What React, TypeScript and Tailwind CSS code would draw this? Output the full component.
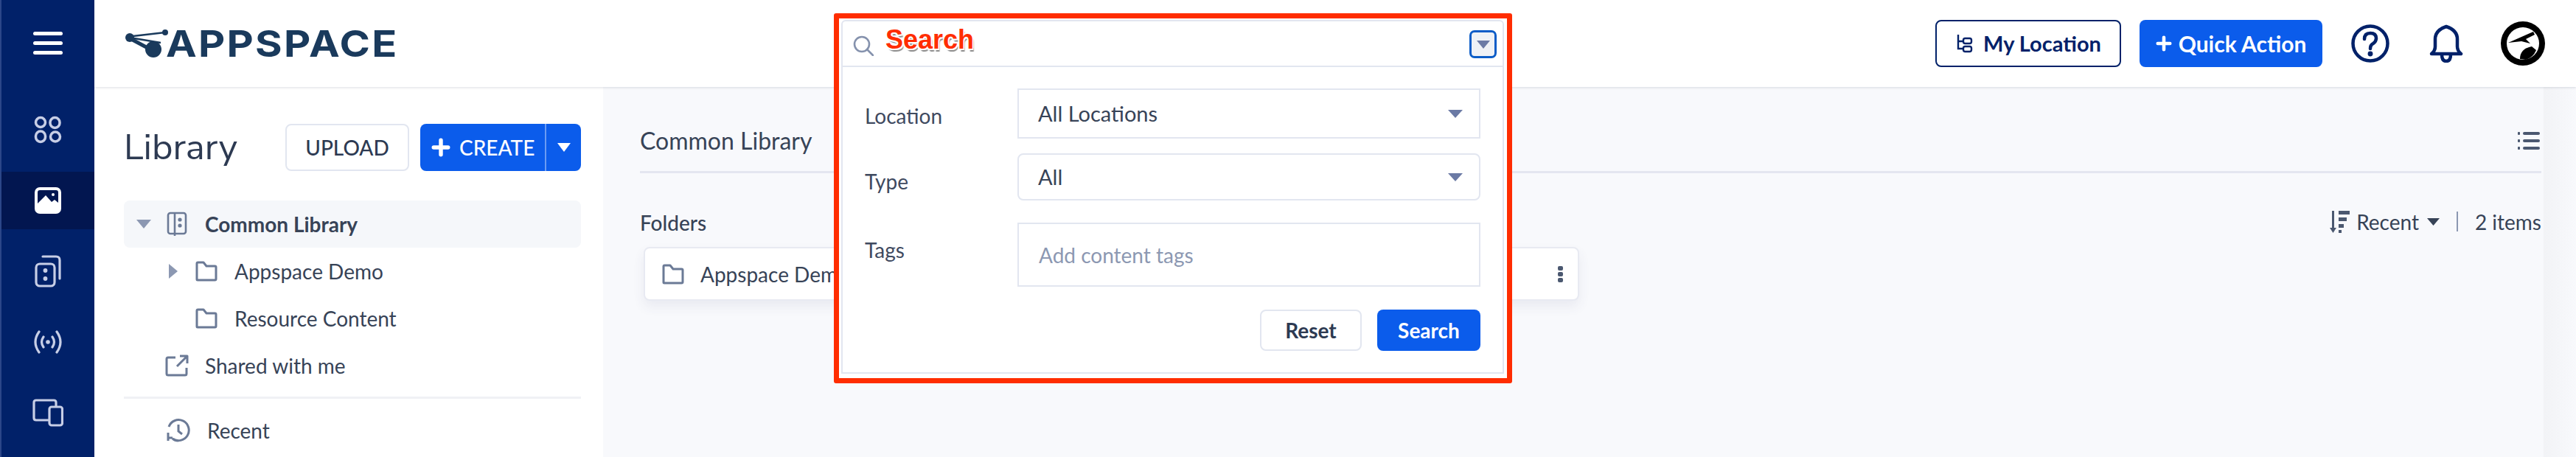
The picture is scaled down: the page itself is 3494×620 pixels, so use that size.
import React from "react";

const Caret = ({ className, right }: { className: string; right?: boolean }) => (
  <svg viewBox="0 0 20 12" className={className} preserveAspectRatio="none" fill="currentColor">
    {right ? <path d="M0 0 L20 6 L0 12 Z" /> : <path d="M0 0 H20 L10 12 Z" />}
  </svg>
);

const Folder = ({ className }: { className: string }) => (
  <svg viewBox="0 0 30 28" className={className} fill="none" stroke="currentColor" strokeWidth="3" strokeLinejoin="round">
    <path d="M2 25 V3.5 Q2 2 3.5 2 H11 L15 7 H26.5 Q28 7 28 8.5 V24.5 Q28 26 26.5 26 H3 Q2 26 2 25 Z" />
  </svg>
);

const Plus = ({ className }: { className: string }) => (
  <svg viewBox="0 0 24 24" className={className} fill="none" stroke="currentColor" strokeWidth="5" strokeLinecap="round">
    <path d="M12 3 V21 M3 12 H21" />
  </svg>
);

function Rail() {
  return (
    <div className="w-[128px] h-full shrink-0 flex flex-col bg-[#012169] border-l-2 border-[#2c4688]">
      <div className="h-[118px] flex items-center justify-center shrink-0">
        <div className="flex flex-col gap-[8px] -mt-[1px]">
          <div className="w-[40px] h-[5px] rounded-full bg-white" />
          <div className="w-[40px] h-[5px] rounded-full bg-white" />
          <div className="w-[40px] h-[5px] rounded-full bg-white" />
        </div>
      </div>
      <div className="h-[115px] flex items-start justify-center pt-[39px] shrink-0">
        <svg viewBox="0 0 38 38" className="w-[38px] h-[38px]" fill="none" stroke="#c7cee6" strokeWidth="3.5">
          <circle cx="9" cy="9" r="6.5" />
          <rect x="22" y="2.5" width="13" height="14" rx="6.5" />
          <rect x="2.5" y="21" width="13" height="14.5" rx="6.5" />
          <circle cx="29" cy="28.5" r="6.5" />
        </svg>
      </div>
      <div className="h-[78px] bg-[#021650] flex items-center justify-center shrink-0">
        <svg viewBox="0 0 36 36" className="w-[36px] h-[36px]">
          <rect width="36" height="36" rx="7" fill="#fff" />
          <path d="M4 22 L4 7 Q4 4 7 4 H29 Q32 4 32 7 V21 L27 17 L23 20 L15 11 Z" fill="#021650" />
          <circle cx="25" cy="10" r="2" fill="#fff" />
        </svg>
      </div>
      <div className="flex flex-col items-center pt-[35px]">
        <svg viewBox="0 0 36 44" className="w-[36px] h-[44px]" fill="none" stroke="#c7cee6" strokeWidth="3.2" strokeLinecap="round">
          <rect x="2" y="12" width="25" height="30" rx="5" />
          <path d="M11 2 H29 Q34 2 34 7 V32" />
          <circle cx="14.5" cy="21" r="1.3" fill="#c7cee6" />
          <circle cx="14.5" cy="32" r="1.3" fill="#c7cee6" />
        </svg>
        <svg viewBox="0 0 42 32" className="w-[42px] h-[32px] mt-[58px]" fill="none" stroke="#c7cee6" strokeWidth="3.2" strokeLinecap="round">
          <path d="M9 2 Q-1 16 9 30 M33 2 Q43 16 33 30 M15 9 Q10 16 15 23 M27 9 Q32 16 27 23" />
          <circle cx="21" cy="16" r="1.2" fill="#c7cee6" />
        </svg>
        <svg viewBox="0 0 42 38" className="w-[42px] h-[38px] mt-[61px]" fill="none" stroke="#c7cee6" strokeWidth="3.2" strokeLinejoin="round">
          <path d="M22 29 H5 Q2 29 2 26 V5 Q2 2 5 2 H29 Q32 2 32 5 V10" />
          <rect x="23" y="11" width="17.5" height="25" rx="3" />
        </svg>
      </div>
    </div>
  );
}

function Header() {
  return (
    <div className="h-[118px] shrink-0 bg-white shadow-[0_1px_3px_rgba(40,50,80,0.16)] relative z-10 flex items-center pl-[42px] pr-[42px]">
      <div className="flex items-center -mt-[1px]">
        <svg viewBox="0 0 60 40" className="w-[60px] h-[40px]" fill="#1a3a5c" stroke="#1a3a5c">
          <circle cx="6" cy="12" r="6" stroke="none" />
          <circle cx="54" cy="5" r="4" stroke="none" />
          <circle cx="38" cy="28" r="11" stroke="none" />
          <path d="M6 10.5 L54 5" strokeWidth="2.4" fill="none" />
          <path d="M6 12 L48 19" strokeWidth="2.4" fill="none" />
          <path d="M6 13 L34 28" strokeWidth="5" fill="none" />
        </svg>
        <div className="ml-[-5px] w-[316px] h-[60px] text-[50px] leading-[60px] tracking-[2px] font-bold text-[#1a3a5c] font-['Inter',sans-serif] whitespace-nowrap origin-left scale-x-[1.12]">APPSPACE</div>
      </div>
      <div className="ml-auto flex items-center">
        <div className="w-[252px] h-[64px] rounded-[8px] border-2 border-[#012169] flex items-center justify-center gap-[14px] text-[#012169] text-[29px] font-bold">
          <svg viewBox="0 0 24 26" className="w-[24px] h-[26px]" fill="none" stroke="currentColor" strokeWidth="2.4">
            <path d="M4 1 V20 H11 M4 10 H11" />
            <rect x="11" y="6" width="11" height="7" rx="2.5" />
            <rect x="11" y="17" width="11" height="7" rx="2.5" />
          </svg>
          <span>My Location</span>
        </div>
        <div className="ml-[25px] w-[248px] h-[64px] rounded-[8px] bg-[#0b5ceb] flex items-center justify-center gap-[9px] text-white text-[30px] font-bold">
          <Plus className="w-[22px] h-[22px]" />
          <span>Quick Action</span>
        </div>
        <svg viewBox="0 0 52 52" className="ml-[39px] w-[52px] h-[52px]" fill="none" stroke="#012169" strokeWidth="4.5" strokeLinecap="round">
          <circle cx="26" cy="26" r="23.5" />
          <path d="M18 20 Q18 12 26 12 Q34 12 34 19 Q34 23 30 26 Q26 28 26 33" />
          <circle cx="26" cy="40" r="1.2" fill="#012169" />
        </svg>
        <svg viewBox="0 0 46 52" className="ml-[54px] w-[46px] h-[52px]" fill="none" stroke="#012169" strokeWidth="4.5" strokeLinejoin="round" strokeLinecap="round">
          <path d="M3 40 Q8 36 8 30 V20 Q8 8 23 3 Q38 8 38 20 V30 Q38 36 43 40 Z" />
          <path d="M17 41 Q17 50 23 50 Q29 50 29 41" />
        </svg>
        <svg viewBox="0 0 60 62" className="ml-[51px] w-[60px] h-[62px]">
          <circle cx="30" cy="31" r="30" fill="#000" />
          <circle cx="30" cy="31" r="22" fill="#fff" />
          <path d="M10 30 L44 15 L46 19 L34 25 L40 31 L28 28 Z" fill="#000" />
          <path d="M26 52 Q26 38 42 35 L48 40 Q44 50 34 53 Z" fill="#000" />
        </svg>
      </div>
    </div>
  );
}

const TreeRow = ({ indent, caret, icon, label, bold, active }: { indent: string; caret?: React.ReactNode; icon: React.ReactNode; label: string; bold?: boolean; active?: boolean }) => (
  <div className={`h-[64px] flex items-center rounded-[8px] text-[#374357] text-[28px] ${indent} ${bold ? "font-bold" : ""} ${active ? "bg-[#f5f7fa]" : ""}`}>
    {caret}
    {icon}
    <span>{label}</span>
  </div>
);

function Library() {
  return (
    <div className="w-[690px] shrink-0 bg-white pl-[40px] pr-[30px] pt-[50px] h-full">
      <div className="h-[64px] flex items-center">
        <div className="text-[49px] text-[#2d3a52] font-['Nunito_Sans','Lato',sans-serif] w-[219px] -mt-[1px]">Library</div>
        <div className="w-[168px] h-[64px] rounded-[8px] border-2 border-[#e2e6f0] flex items-center justify-center text-[28px] font-medium text-[#2d3a52]">UPLOAD</div>
        <div className="ml-[15px] w-[218px] h-[64px] rounded-[8px] bg-[#0b5ceb] flex text-white text-[28px] font-medium">
          <div className="w-[171px] flex items-center pl-[15px] gap-[12px] border-r-2 border-[#6b9bf3]">
            <Plus className="w-[26px] h-[26px]" />
            <span>CREATE</span>
          </div>
          <div className="flex-1 flex items-center justify-center"><Caret className="w-[18px] h-[12px]" /></div>
        </div>
      </div>
      <div className="mt-[40px]">
        <TreeRow
          active bold indent="pl-[17px]" label="Common Library"
          caret={<Caret className="w-[20px] h-[12px] text-[#8c98b2] mr-[21px]" />}
          icon={
            <svg viewBox="0 0 28 34" className="w-[28px] h-[34px] mr-[24px] text-[#6b7a96]" fill="none" stroke="currentColor" strokeWidth="2.6">
              <rect x="2" y="2" width="24" height="28" rx="3" />
              <path d="M11 2 V33" />
              <circle cx="18" cy="11" r="1.3" fill="currentColor" />
              <circle cx="18" cy="19" r="1.3" fill="currentColor" />
            </svg>
          }
        />
        <TreeRow
          indent="pl-[61px]" label="Appspace Demo"
          caret={<Caret right className="w-[12px] h-[20px] text-[#8c98b2] mr-[24px]" />}
          icon={<Folder className="w-[30px] h-[28px] text-[#6b7a96] mr-[23px]" />}
        />
        <TreeRow
          indent="pl-[97px]" label="Resource Content"
          icon={<Folder className="w-[30px] h-[28px] text-[#6b7a96] mr-[23px]" />}
        />
        <TreeRow
          indent="pl-[56px]" label="Shared with me"
          icon={
            <svg viewBox="0 0 32 30" className="w-[32px] h-[30px] mr-[22px] text-[#6b7a96]" fill="none" stroke="currentColor" strokeWidth="3" strokeLinejoin="round">
              <path d="M14 4 H4 Q2 4 2 6 V26 Q2 28 4 28 H27 Q29 28 29 26 V18" />
              <path d="M16 16 L29 3 M20 2 H30 V12" />
            </svg>
          }
        />
        <div className="h-[3px] bg-[#f0f1f5] mt-[10px]" />
        <div className="mt-[25px] h-[36px] flex items-center pl-[58px] text-[#374357] text-[28px]">
          <svg viewBox="0 0 32 32" className="w-[32px] h-[32px] mr-[23px] text-[#6b7a96]" fill="none" stroke="currentColor" strokeWidth="3">
            <path d="M3 11 A14 14 0 1 1 8 27 Q10 30 16 30" />
            <path d="M16 8 V17 L21 21" />
            <path d="M2 19 V30 M2 26 H8" />
          </svg>
          <span>Recent</span>
        </div>
      </div>
    </div>
  );
}

function Content() {
  return (
    <div className="flex-1 h-full bg-[#f8f9fc] flex min-w-0">
      <div className="flex-1 pl-[50px] min-w-0 pr-[3px]">
        <div className="h-[117px] flex items-start justify-between pr-[2px] border-b-[3px] border-[#e4e6f0] pt-[52px]">
          <span className="text-[32px] leading-[42px] text-[#374357]">Common Library</span>
          <svg viewBox="0 0 30 25" className="w-[30px] h-[25px] mt-[8px]" fill="#4b5870">
            <rect x="0" y="1" width="3" height="4" rx="1" />
            <rect x="7" y="1" width="23" height="4" rx="2" />
            <rect x="0" y="11" width="3" height="4" rx="1" />
            <rect x="7" y="11" width="23" height="4" rx="2" />
            <rect x="0" y="21" width="3" height="4" rx="1" />
            <rect x="7" y="21" width="23" height="4" rx="2" />
          </svg>
        </div>
        <div className="flex items-center justify-between mt-[48px] h-[38px] text-[#374357] text-[28px]">
          <span className="font-medium">Folders</span>
          <div className="flex items-center -mt-[3px]">
            <svg viewBox="0 0 28 30" className="w-[28px] h-[30px] mr-[8px]" fill="#4b5870">
              <rect x="3" y="0" width="3" height="26" />
              <path d="M0 23 H9 L4.5 30 Z" />
              <rect x="12" y="0" width="15" height="5" />
              <rect x="12" y="9" width="11" height="5" />
              <rect x="12" y="18" width="7" height="5" />
              <rect x="12" y="26" width="4" height="4" />
            </svg>
            <span>Recent</span>
            <Caret className="w-[17px] h-[10px] ml-[11px] text-[#374357]" />
            <div className="w-[2px] h-[27px] bg-[#8c98b2] ml-[23px] mr-[23px]" />
            <span>2 items</span>
          </div>
        </div>
        <div className="mt-[14px] ml-[5px] w-[1269px] h-[73px] rounded-[8px] bg-white border-2 border-[#e8eaf2] shadow-[0_8px_16px_rgba(60,70,110,0.08)] flex items-center pl-[23px] pr-[20px] text-[#374357] text-[28px]">
          <Folder className="w-[30px] h-[28px] text-[#6b7a96] mr-[22px]" />
          <span>Appspace Demo</span>
          <svg viewBox="0 0 7 22" className="w-[7px] h-[22px] ml-auto" fill="#4b5870">
            <rect width="7" height="6" rx="2" />
            <rect y="8" width="7" height="6" rx="2" />
            <rect y="16" width="7" height="6" rx="2" />
          </svg>
        </div>
      </div>
      <div className="w-[44px] shrink-0 bg-gradient-to-r from-[#f2f3f6] to-[#f8f9fc]" />
    </div>
  );
}

function SearchPopup() {
  return (
    <div className="absolute left-[1131px] top-[18px] w-[920px] h-[502px] border-[7px] border-[#ff2d00] rounded-[3px] bg-white pl-[3px] pr-[4px] pt-[2px] pb-[6px] z-20">
      <div className="h-full border-2 border-[#e2e6f0] rounded-t-[6px] bg-white">
        <div className="h-[62px] border-b-2 border-[#e2e6f0] flex items-center pl-[14px] pr-[8px]">
          <svg viewBox="0 0 28 28" className="w-[28px] h-[28px] mt-[5px]" fill="none" stroke="#8592ad" strokeWidth="2.6" strokeLinecap="round">
            <circle cx="12" cy="12" r="10" />
            <path d="M19 19 L27 27" />
          </svg>
          <span className="ml-[16px] -mt-[10px] text-[36px] leading-none font-bold text-[#ff2d00] font-['Liberation_Sans',sans-serif] [text-shadow:1.5px_1.5px_0_#fff,-1.5px_-1.5px_0_#fff,1.5px_-1.5px_0_#fff,-1.5px_1.5px_0_#fff,2px_4px_1px_#8b8b8b]">Search</span>
          <div className="ml-auto w-[37px] h-[38px] rounded-[7px] border-[3px] border-[#0a5cc7] bg-[#eef1f6] flex items-center justify-center mt-[2px]">
            <Caret className="w-[18px] h-[11px] text-[#6b7aa5]" />
          </div>
        </div>
        <div className="pl-[30px] pr-[30px] pt-[29px] text-[#3f4a5f] text-[28px]">
          <div className="flex items-center h-[68px]">
            <span className="w-[207px] mt-[6px]">Location</span>
            <div className="flex-1 h-[68px] border-2 border-[#e2e6f0] flex items-center justify-between pl-[26px] pr-[22px]">
              <span className="text-[#374357] text-[29px]">All Locations</span>
              <Caret className="w-[20px] h-[11px] text-[#6b7aa5]" />
            </div>
          </div>
          <div className="flex items-center h-[64px] mt-[20px]">
            <span className="w-[207px] mt-[12px]">Type</span>
            <div className="flex-1 h-[64px] border-2 border-[#e2e6f0] rounded-[8px] flex items-center justify-between pl-[26px] pr-[22px]">
              <span className="text-[#374357] text-[29px]">All</span>
              <Caret className="w-[20px] h-[11px] text-[#6b7aa5]" />
            </div>
          </div>
          <div className="flex items-start h-[87px] mt-[30px]">
            <span className="w-[207px] mt-[16px]">Tags</span>
            <div className="flex-1 h-[87px] border-2 border-[#e2e6f0] flex items-center pl-[27px] text-[#8c98b2]">Add content tags</div>
          </div>
          <div className="flex justify-end gap-[21px] mt-[31px]">
            <div className="w-[138px] h-[56px] rounded-[8px] border-2 border-[#e2e6f0] flex items-center justify-center font-bold text-[#2d3a52]">Reset</div>
            <div className="w-[140px] h-[56px] rounded-[8px] bg-[#0b5ceb] flex items-center justify-center font-bold text-white">Search</div>
          </div>
        </div>
      </div>
    </div>
  );
}

export default function App() {
  return (
    <div className="relative w-[3494px] h-[620px] overflow-hidden flex bg-white font-['Lato',sans-serif]">
      <Rail />
      <div className="flex-1 flex flex-col min-w-0">
        <Header />
        <div className="flex-1 flex min-h-0">
          <Library />
          <Content />
        </div>
      </div>
      <SearchPopup />
    </div>
  );
}
